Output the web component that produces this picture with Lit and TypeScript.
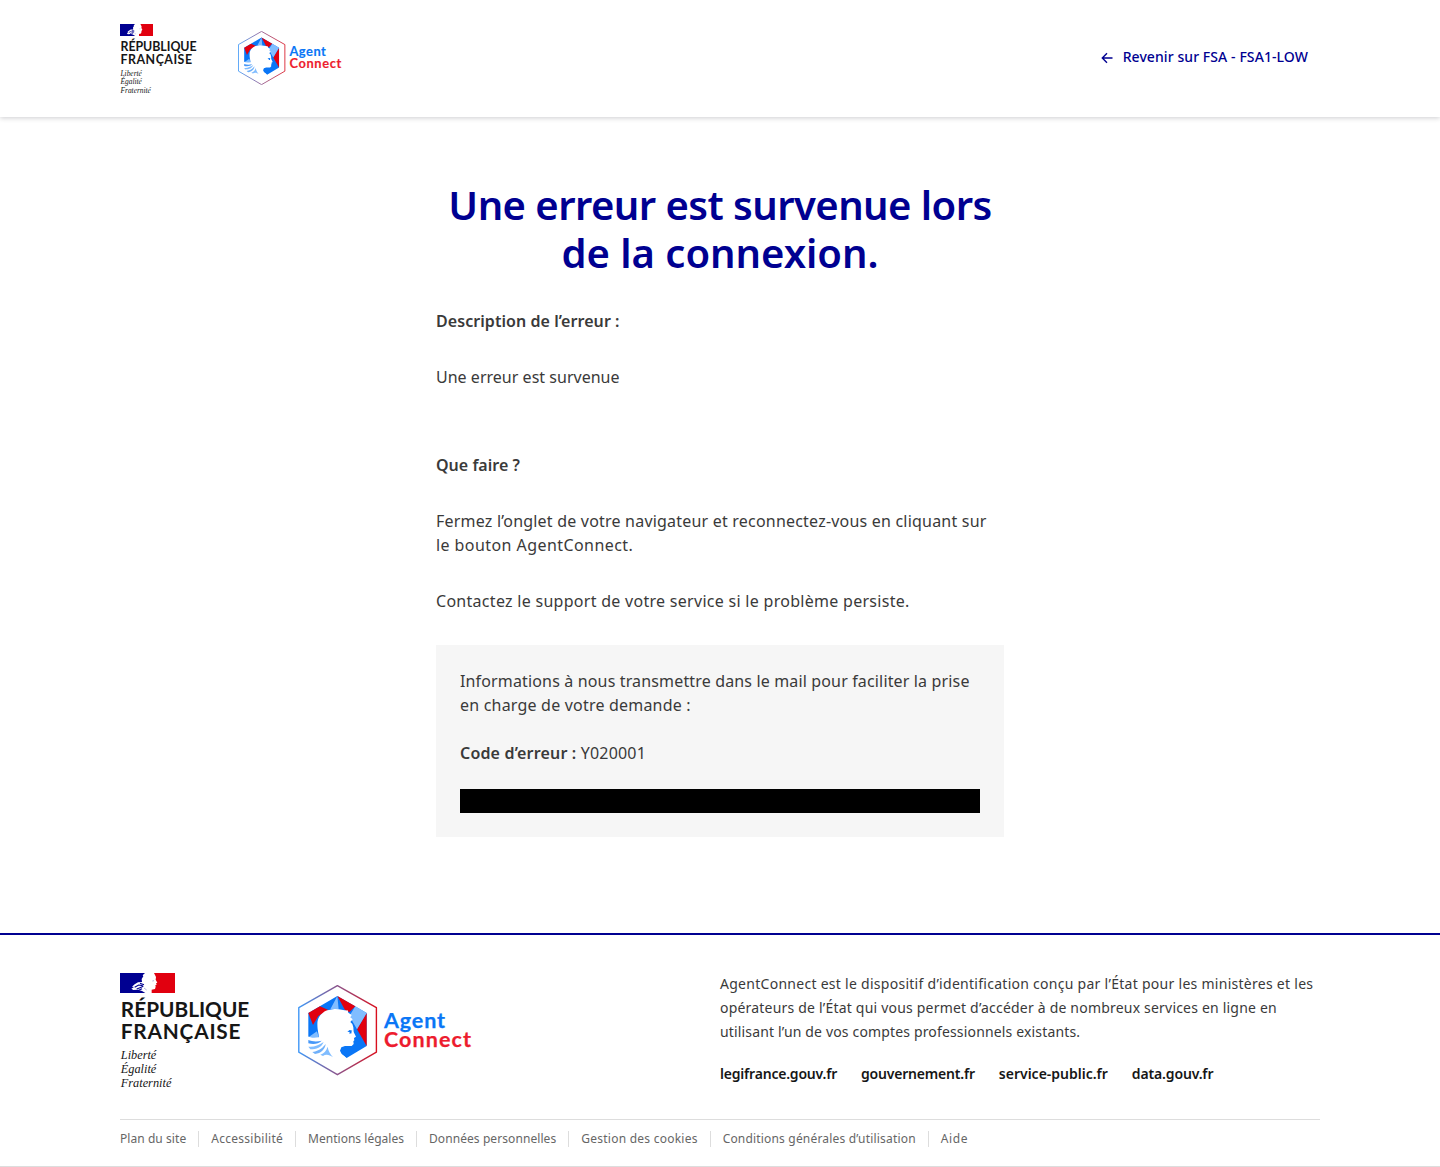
import { LitElement, html, css } from "lit";
import { customElement, property } from "lit/decorators.js";
import { styleMap } from "lit/directives/style-map.js";

@customElement("republic-mark")
class RepublicMark extends LitElement {
  @property() size = "small";
  static styles = css`
    :host { display: block; color: #161616; }
    .flag { display: block; width: 33px; height: 12px; }
    .name { font: 700 12.4px/13px Lato, sans-serif; letter-spacing: -0.05px; margin-top: 4px; padding-left: 0.5px; white-space: nowrap; }
    .motto { font: italic 400 7.4px/8.3px "Liberation Serif", serif; margin-top: 4px; padding-left: 0.5px; }
    .second { letter-spacing: 0.5px; }
    .large .flag { width: 55px; height: 20px; }
    .large .name { font-size: 20.8px; line-height: 22px; letter-spacing: 0; margin-top: 5px; padding-left: 0.8px; }
    .large .second { letter-spacing: 0.8px; }
    .large .motto { font-size: 12.3px; line-height: 14px; margin-top: 6px; padding-left: 0.8px; }
  `;
  render() {
    return html`<div class=${this.size}>
      <svg class="flag" viewBox="0 0 165 60">
        <path fill="#000091" d="M0 0H75L68 7L70 10L65 18L66 27L54 28L44 34L36 41L42 42L34 47L40 51L54 50L66 54L76 60H0Z" />
        <path fill="#e1000f" d="M102 0H165V60H95V50L105 48L107 41L106 37L110 35L108 31L112 29L107 20L108 12Z" />
        <path fill="none" stroke="#000091" stroke-width="3.4" d="M44 43L56 36L68 38M50 48L60 44L70 40M60 31L72 35M56 52L66 47" />
        <path fill="none" stroke="#8f8fc8" stroke-width="2" d="M97 24L102 23M72 45L80 51" />
      </svg>
      <div class="name">RÉPUBLIQUE<br /><span class="second">FRANÇAISE</span></div>
      <div class="motto">Liberté<br />Égalité<br />Fraternité</div>
    </div>`;
  }
}

@customElement("agent-logo")
class AgentLogo extends LitElement {
  static styles = css`
    :host { display: block; }
    svg { display: block; width: 100%; }
    text { font: 700 21.5px Lato, sans-serif; stroke-width: 0.25; }
  `;
  render() {
    return html`<svg viewBox="0 0 174 91">
      <defs>
        <linearGradient id="edge"><stop offset="0" stop-color="#3f97f6" /><stop offset="1" stop-color="#d8101f" /></linearGradient>
      </defs>
      <path fill="none" stroke="url(#edge)" stroke-width="1.4" stroke-linejoin="round" d="M39.4 .7L78.4 22.7V67.2L39.4 89.7L.8 67.2V22.7Z" />
      <g transform="translate(0 -.3) scale(.33333) translate(-9 -6)">
        <path fill="#0a76f6" d="M127 40L215 91V190L155 226L120 200L60 206L40 190V91Z" />
        <path fill="#e1000f" d="M40 91L75 71L100 82L70 100L54 127ZM127 40L181 71L163 88L150 82ZM215 91V190L186 140Z" />
        <path fill="#81bdff" d="M127 40L106 80H131ZM181 71L215 91L186 140L163 100ZM66 146L40 164L46 172L75 176Z" />
        <path fill="#fff" d="M68 140C66 118 66 104 84 90C96 80 108 82 118 79C134 78 148 84 158 83L160 90L170 97L166 104L173 110L166 118L172 124L175 134L176 148L183 162L177 166L178 173L175 176L176 184L170 190L150 190L139 194L135 204L140 214L150 222L155 230L120 240L36 210V160C46 166 58 166 72 164Z" />
        <path fill="#0a76f6" d="M40 172C50 176 64 178 80 174C70 184 56 186 40 182Z" opacity=".75" />
        <path fill="#81bdff" d="M40 192C56 194 70 188 86 178C80 194 64 200 46 200Z" />
        <path fill="#4b9cf9" d="M52 208C66 206 80 200 92 184C90 200 78 212 60 214Z" opacity=".8" />
        <path fill="#81bdff" d="M76 216C88 212 94 204 98 192C100 206 106 214 114 224C104 216 92 214 84 220Z" />
        <path fill="#0a76f6" d="M157 147L164 142L172 144L169 147L170 152L163 153L164 148Z" />
      </g>
      <text x="86" y="42.6" fill="#0a76f6" stroke="#0a76f6" textLength="61">Agent</text>
      <text x="86" y="62.4" fill="#ed1c2e" stroke="#ed1c2e" textLength="87">Connect</text>
    </svg>`;
  }
}

type Line = [text: string, tracking: number];

const line = ([text, tracking]: Line) =>
  html`<span style=${styleMap({ letterSpacing: `${tracking}px` })}>${text}</span>`;

const sites: Line[] = [
  ["legifrance.gouv.fr", -0.2],
  ["gouvernement.fr", -0.2],
  ["service-public.fr", 0],
  ["data.gouv.fr", -0.15],
];

const legal: Line[] = [
  ["Plan du site", 0.06],
  ["Accessibilité", 0.27],
  ["Mentions légales", 0.02],
  ["Données personnelles", 0.08],
  ["Gestion des cookies", 0.24],
  ["Conditions générales d’utilisation", 0.18],
  ["Aide", 0.6],
];

@customElement("app-root")
class AppRoot extends LitElement {
  static styles = css`
    :host { display: block; height: 1167px; overflow: hidden; background: #fff; color: #3a3a3a; font: 400 16px/24px "Noto Sans", sans-serif; }
    * { box-sizing: border-box; }
    h1, p { margin: 0; }
    b { font-weight: 600; }
    header { height: 117px; padding: 24px 120px 0; display: flex; align-items: flex-start; box-shadow: 0 1px 5px rgba(0, 0, 18, 0.2); }
    republic-mark { width: 118px; }
    header agent-logo { width: 104px; margin-top: 7px; }
    .back { display: flex; align-items: center; gap: 9px; margin: 21px 12px 0 auto; color: #000091; font-size: 14px; font-weight: 500; line-height: 24px; letter-spacing: 0.08px; white-space: nowrap; }
    .back svg { width: 14px; height: 14px; margin-top: 2px; }
    main { width: 568px; margin: 64px auto 0; height: 752px; white-space: nowrap; }
    h1 { color: #000091; font-size: 40px; line-height: 48px; font-weight: 600; text-align: center; margin-bottom: 32px; }
    .gap { margin-bottom: 32px; }
    .wide { margin-bottom: 64px; }
    .panel { background: #f6f6f6; padding: 24px; height: 192px; }
    .panel p { margin-bottom: 24px; }
    .code-row { letter-spacing: 0.17px; }
    .mask { height: 24px; background: #000; }
    footer { border-top: 2px solid #000091; padding-top: 38px; }
    .top { display: flex; padding: 0 120px; height: 146px; }
    .top republic-mark { width: 178px; }
    .top agent-logo { width: 174px; margin-top: 12px; }
    .info { margin: -1px 0 0 248px; font-size: 14px; white-space: nowrap; }
    .sites { display: flex; gap: 24px; margin-top: 18px; color: #161616; font-weight: 600; }
    .legal { margin: 0 120px; border-top: 1px solid #ddd; display: flex; align-items: center; height: 47px; padding-bottom: 8px; font-size: 12px; color: #666; white-space: nowrap; }
    .legal span + span { border-left: 1px solid #ddd; margin-left: 12px; padding-left: 12px; }
    .legal span { line-height: 16px; }
    .end { border-top: 1px solid #ddd; height: 1px; }
  `;
  render() {
    return html`
      <header>
        <republic-mark></republic-mark>
        <agent-logo></agent-logo>
        <div class="back">
          <svg viewBox="0 0 14 14" fill="none" stroke="currentColor" stroke-width="1.4"><path d="M12.5 7H2.5M7 2.3L2.3 7L7 11.7" /></svg>
          <span>Revenir sur FSA - FSA1-LOW</span>
        </div>
      </header>
      <main>
        <h1>${line(["Une erreur est survenue lors", -0.55])}<br />${line(["de la connexion.", -0.02])}</h1>
        <p class="gap"><b>${line(["Description de l’erreur :", 0.06])}</b></p>
        <p class="wide">${line(["Une erreur est survenue", 0.02])}</p>
        <p class="gap"><b>${line(["Que faire ?", 0.02])}</b></p>
        <p class="gap">${line(["Fermez l’onglet de votre navigateur et reconnectez-vous en cliquant sur", 0.205])}<br />${line(["le bouton AgentConnect.", 0.43])}</p>
        <p class="gap">${line(["Contactez le support de votre service si le problème persiste.", 0.285])}</p>
        <div class="panel">
          <p>${line(["Informations à nous transmettre dans le mail pour faciliter la prise", 0.15])}<br />${line(["en charge de votre demande :", 0.2])}</p>
          <p class="code-row"><b>Code d’erreur :</b> Y020001</p>
          <div class="mask"></div>
        </div>
      </main>
      <footer>
        <div class="top">
          <republic-mark size="large"></republic-mark>
          <agent-logo></agent-logo>
          <div class="info">
            <p>${line(["AgentConnect est le dispositif d’identification conçu par l’État pour les ministères et les", 0.275])}<br />${line(["opérateurs de l’État qui vous permet d’accéder à de nombreux services en ligne en", 0.2])}<br />${line(["utilisant l’un de vos comptes professionnels existants.", 0.155])}</p>
            <div class="sites">${sites.map(line)}</div>
          </div>
        </div>
        <div class="legal">${legal.map(line)}</div>
        <div class="end"></div>
      </footer>`;
  }
}
